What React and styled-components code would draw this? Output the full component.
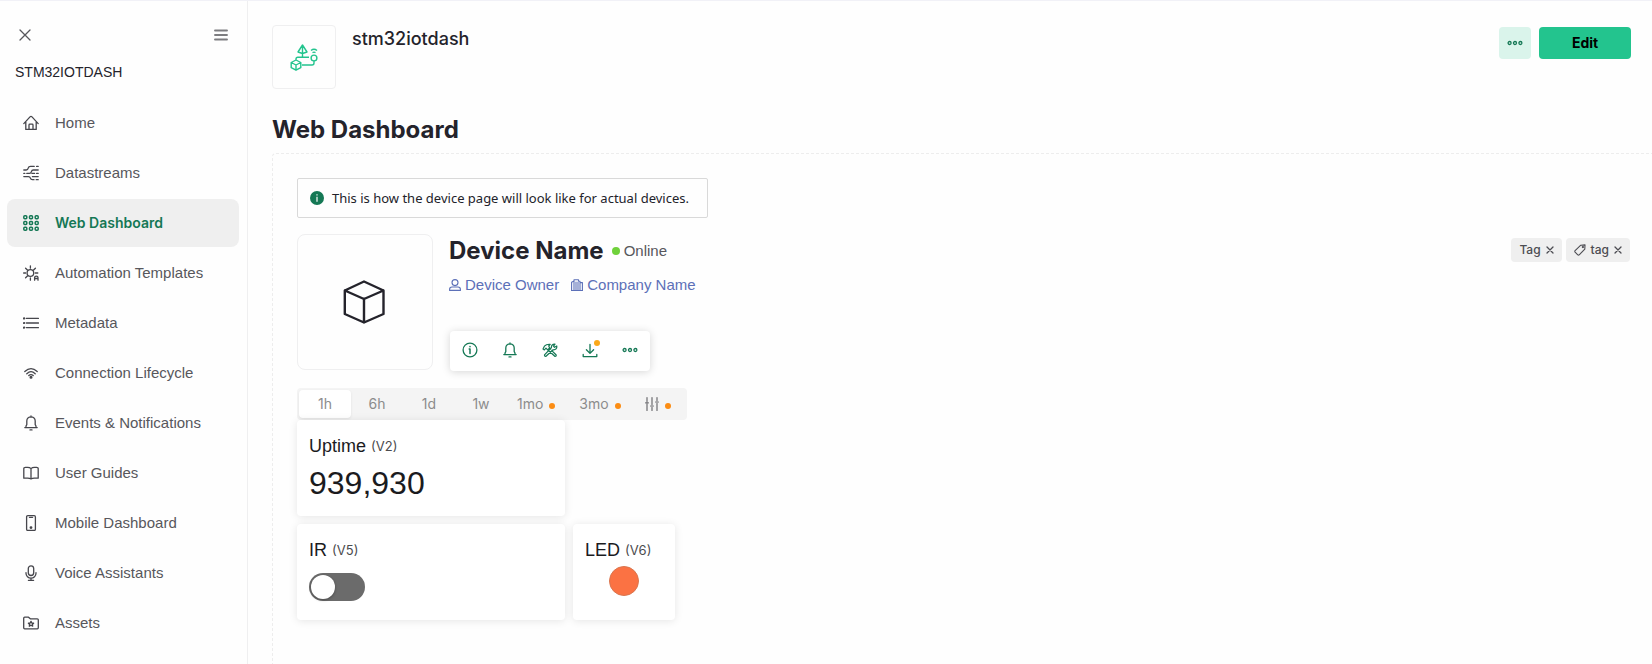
import React, { useState } from "react";
import styled, { createGlobalStyle, css } from "styled-components";

const sans = `"Liberation Sans", Arial, sans-serif`;
const display = `Inter, "Liberation Sans", sans-serif`;

const color = {
  page: "#fefefe",
  ink: "#24232b",
  text: "#57575c",
  muted: "#8c8c8c",
  line: "#efeff0",
  green: "#157855",
  brand: "#23c48e",
  link: "#5c70b8",
  orange: "#fb8c13",
};

const GlobalStyle = createGlobalStyle`
  *, *::before, *::after { box-sizing: border-box; }
  body { margin: 0; background: ${color.page}; color: ${color.ink}; font: 15px/20px ${sans}; overflow: hidden; }
  button { border: 0; padding: 0; background: none; font: inherit; color: inherit; cursor: pointer; }
  h1, h2, h3, p, ul { margin: 0; padding: 0; }
  svg { display: block; flex: none; }
`;

const Page = styled.div`
  display: flex;
  height: 100vh;
  overflow: hidden;
  border-top: 1px solid #f1f1f7;
`;

/* Sidebar */
const Sidebar = styled.aside`
  flex: none;
  width: 248px;
  border-right: 1px solid ${color.line};
  border-top-left-radius: 6px;
`;
const SidebarTop = styled.div`
  display: flex;
  justify-content: space-between;
  padding: 26px 18px 0 17px;
  color: #57575c;
`;
const IconButton = styled.button`
  display: grid;
  place-items: center;
  width: ${(p) => p.$size || 16}px;
  height: ${(p) => p.$size || 16}px;
`;
const MenuButton = styled(IconButton)`
  color: #7d7d80;
`;
const ProductName = styled.p`
  padding: 18px 15px 0;
  font-size: 14px;
  line-height: 22px;
`;
const NavList = styled.ul`
  list-style: none;
  display: flex;
  flex-direction: column;
  gap: 2px;
  padding: 16px 8px 0 7px;
`;
const NavLink = styled.a`
  display: flex;
  align-items: center;
  gap: 16px;
  height: 48px;
  padding: 0 16px;
  border-radius: 8px;
  color: ${color.text};
  text-decoration: none;
  svg { color: #46464c; }
  ${(p) =>
    p.$active &&
    css`
      background: #efefef;
      color: ${color.green};
      font: 600 14px/20px ${display};
      svg { color: ${color.green}; }
    `}
`;

/* Main column */
const Main = styled.main`
  flex: 1;
  min-width: 0;
  display: flex;
  flex-direction: column;
  padding: 24px 0 0 24px;
`;
const Header = styled.header`
  display: flex;
  gap: 16px;
  padding-right: 21px;
`;
const ProductIcon = styled.div`
  display: grid;
  place-items: center;
  width: 64px;
  height: 64px;
  border: 1px solid ${color.line};
  border-radius: 4px;
`;
const Title = styled.h1`
  flex: 1;
  font: 500 18px/28px ${display};
`;
const Actions = styled.div`
  display: flex;
  gap: 8px;
  padding-top: 2px;
`;
const MoreButton = styled.button`
  display: grid;
  place-items: center;
  width: 32px;
  height: 32px;
  border-radius: 4px;
  background: #daf4eb;
  color: ${color.green};
`;
const EditButton = styled.button`
  width: 92px;
  height: 32px;
  border-radius: 4px;
  background: ${color.brand};
  color: #000;
  font: 700 14px/20px ${display};
`;
const Heading = styled.h2`
  font: 700 24px/34px ${display};
`;
const SectionTitle = styled(Heading)`
  padding: 24px 0 6px;
`;
const Canvas = styled.section`
  flex: 1;
  padding: 24px 22px 0 24px;
  border: 1px dashed #ededed;
  border-width: 1px 0 0 1px;
  border-top-left-radius: 4px;
`;
const Notice = styled.div`
  display: inline-flex;
  align-items: center;
  gap: 8px;
  height: 40px;
  padding: 0 18px 0 12px;
  border: 1px solid #d9d9d9;
  border-radius: 2px;
  color: #22222a;
  font: 13px/20px "Noto Sans", "Open Sans", sans-serif;
  vertical-align: top;
`;
const Device = styled.div`
  display: flex;
  gap: 16px;
  padding-top: 16px;
`;
const DeviceImage = styled.div`
  flex: none;
  display: grid;
  place-items: center;
  width: 136px;
  height: 136px;
  border: 1px solid ${color.line};
  border-radius: 8px;
`;
const DeviceInfo = styled.div`
  flex: 1;
`;
const Row = styled.div`
  display: flex;
  align-items: center;
  gap: ${(p) => p.$gap || 8}px;
`;
const Status = styled.span`
  display: flex;
  align-items: center;
  gap: 4px;
  color: ${color.text};
`;
const Dot = styled.span`
  width: ${(p) => p.$size || 6}px;
  height: ${(p) => p.$size || 6}px;
  border-radius: 50%;
  background: ${(p) => p.$color || color.orange};
`;
const Owners = styled(Row)`
  padding-top: 7px;
`;
const OwnerLink = styled.a`
  display: flex;
  align-items: center;
  gap: 4px;
  color: ${color.link};
  text-decoration: none;
`;
const Toolbar = styled.div`
  display: flex;
  width: fit-content;
  margin: 36px 0 0 1px;
  border-radius: 4px;
  background: #fff;
  box-shadow: 0 1px 8px rgba(0, 0, 0, 0.16);
  color: ${color.green};
`;
const ToolButton = styled(IconButton)`
  position: relative;
  padding-bottom: 2px;
`;
const Badge = styled(Dot)`
  position: absolute;
  top: 9px;
  right: 10px;
  background: #fba919;
`;
const Tags = styled.div`
  display: flex;
  align-items: flex-start;
  gap: 4px;
  padding-top: 4px;
`;
const Tag = styled.span`
  display: flex;
  align-items: center;
  gap: 5px;
  height: 24px;
  padding: 0 8px;
  border-radius: 4px;
  background: #efefef;
  color: #4c4c52;
  font: 500 12px/16px ${display};
`;

/* Time range */
const Ranges = styled.div`
  display: inline-flex;
  margin-top: 17px;
  padding: 2px;
  border-radius: 4px;
  background: #f4f4f4;
  color: ${color.muted};
  vertical-align: top;
  svg { color: #6a6a6e; }
`;
const Range = styled.button`
  display: flex;
  align-items: center;
  justify-content: center;
  gap: 6px;
  min-width: ${(p) => (p.$limited ? 0 : 52)}px;
  height: 28px;
  padding: ${(p) => (p.$limited ? "0 14px 0 10px" : "0 12px")};
  border-radius: 4px;
  font: 14px/20px ${display};
  ${(p) =>
    p.$active &&
    css`
      background: #fff;
      box-shadow: 0 1px 3px rgba(0, 0, 0, 0.08);
    `}
  ${Dot} { margin-top: 4px; }
`;

/* Widgets */
const Widgets = styled.div`
  display: grid;
  grid-template-columns: 268px 102px;
  grid-auto-rows: 96px;
  gap: 8px;
`;
const Widget = styled.article`
  grid-column: ${(p) => p.$column || 1};
  padding: 12px;
  border-radius: 4px;
  background: #fff;
  box-shadow: 0 1px 8px rgba(0, 0, 0, 0.1);
`;
const WidgetTitle = styled.h3`
  font: 400 18px/28px ${sans};
  color: #1b1b1e;
  white-space: nowrap;
`;
const Pin = styled.span`
  color: #4b4b4e;
  font: 13px/20px ${display};
  vertical-align: 1px;
`;
const Value = styled.p`
  color: #1b1b1e;
  font: 32px/46px ${sans};
`;
const Switch = styled.input`
  appearance: none;
  display: flex;
  width: 56px;
  height: 28px;
  margin: 9px 0 0;
  padding: 2px;
  border-radius: 14px;
  background: #6b6b6b;
  cursor: pointer;
  &::before {
    content: "";
    width: 24px;
    height: 24px;
    border-radius: 50%;
    background: #fff;
    box-shadow: 0 1px 3px rgba(0, 0, 0, 0.3);
  }
  &:checked { justify-content: flex-end; background: ${color.brand}; }
`;
const Led = styled.div`
  width: 30px;
  height: 30px;
  margin: 2px auto 0;
  border: 1px solid #d9764f;
  border-radius: 50%;
  background: #fb7243;
`;

const Svg = ({ size = 16, box = 16, width = 1.2, children }) => (
  <svg
    width={size}
    height={size}
    viewBox={`0 0 ${box} ${box}`}
    fill="none"
    stroke="currentColor"
    strokeWidth={width}
    strokeLinecap="round"
    strokeLinejoin="round"
    aria-hidden="true"
  >
    {children}
  </svg>
);

const Bell = () => (
  <Svg width={1.3}>
    <path d="M1.8 12.6h12.4M3 12.4V11l.8-1.4V6a4.2 4.2 0 0 1 8.4 0v3.6L13 11v1.4M8 2V.9M7 14.9h2" />
  </Svg>
);
const More = () => (
  <Svg width={1.3}>
    <circle cx="2.6" cy="8" r="1.5" />
    <circle cx="8" cy="8" r="1.5" />
    <circle cx="13.4" cy="8" r="1.5" />
  </Svg>
);
const Cross = ({ size = 8, width = 1.3 }) => (
  <Svg size={size} box={size} width={width}>
    <path d={`M1 1 ${size - 1} ${size - 1}M${size - 1} 1 1 ${size - 1}`} />
  </Svg>
);

const navItems = [
  ["Home", <Svg width={1.3}><path d="M.8 8.6 7 1.9q1-1 2 0l6.2 6.7M2.8 7v7.4h10.4V7M6 14.2V10q0-.8.8-.8h2.4q.8 0 .8.8v4.2" /></Svg>],
  [
    "Datastreams",
    <Svg width={1.3}>
      <path d="M7.6 1.4h3.6M13.6 1.4h1.6M.8 5h2.4q1.6 0 2-1.8T7.6 1.4M.8 8.4h1M3.8 8.4h2.6q1.600 0 2-1.700t2-1.700h4.800M.8 11.600h4.600q1.600 0 2 1.500t2 1.600h1.600M13.200 14.700h2M9 8.400h2.600M13.600 8.400h1.600M9.400 11.600h5.800" />
    </Svg>,
  ],
  [
    "Web Dashboard",
    <Svg width={1.5}>
      {[2.3, 8, 13.7].map((y) => [2.3, 8, 13.7].map((x) => <rect key={`${x}-${y}`} x={x - 1.5} y={y - 1.5} width="3" height="3" rx="1" />))}
    </Svg>,
  ],
  [
    "Automation Templates",
    <Svg width={1.3}>
      <circle cx="7.4" cy="8" r="3.3" />
      <path d="M7.4.8v2.4M.6 8h2M12.2 8h2.6M2.6 3.2 4.4 5M12.4 3.2 10.6 5M2.6 12.8 4.4 11M7.4 13v2.2M11.6 15.2v-2.6q0-1.5 1.7-1.5t1.7 1.5v2.6M11.8 13.5H15" />
    </Svg>,
  ],
  [
    "Metadata",
    <Svg width={1.4}>
      <path d="M3.4 3.4h12M3.4 8h12M3.4 12.6h12" />
      <path d="M1 3.4h.2M1 8h.2M1 12.6h.2" strokeWidth="2.2" />
    </Svg>,
  ],
  [
    "Connection Lifecycle",
    <Svg width={1.3}>
      <path d="M1.8 6.5Q8 .8 14.2 6.5M3.8 8.7Q8 4.6 12.2 8.7M5.8 10.6Q8 8.6 10.2 10.6" />
      <circle cx="8" cy="12.2" r=".9" fill="currentColor" />
    </Svg>,
  ],
  ["Events & Notifications", <Bell />],
  ["User Guides", <Svg width={1.3}><path d="M8 3.6Q6.8 2.4 4.6 2.4H2.4Q.8 2.4.8 3.6v9.6h3.8q2.2 0 3.4.6 1.2-.6 3.4-.6h3.8V3.6q0-1.2-1.6-1.2h-2.2Q9.2 2.4 8 3.6v10" /></Svg>],
  [
    "Mobile Dashboard",
    <Svg width={1.3}>
      <rect x="3.6" y=".7" width="8.8" height="14.8" rx="1.2" />
      <path d="M6.4 2.3h3.2" />
      <circle cx="8" cy="12.6" r=".8" fill="currentColor" />
    </Svg>,
  ],
  ["Voice Assistants", <Svg width={1.3}><rect x="5.3" y=".9" width="5.4" height="9.6" rx="2.7" /><path d="M3 7.6v.6a5 5 0 0 0 10 0v-.6M8 13.2v2M5.4 15.3h5.2" /></Svg>],
  [
    "Assets",
    <Svg width={1.3}>
      <path d="M.7 3.2q0-1 1-1h3.8l1.8 1.6h7q1 0 1 1v8q0 1-1 1H1.7q-1 0-1-1z" />
      <path d="m8 6.4.8 1.6 1.8.2-1.3 1.2.4 1.8L8 10.3l-1.7.9.4-1.8-1.3-1.2L7.2 8z" />
    </Svg>,
  ],
];

const ProductGlyph = () => (
  <svg width="28" height="28" viewBox="0 0 28 28" fill="none" stroke={color.brand} strokeWidth="1.4" strokeLinejoin="round" aria-hidden="true">
    <path d="M12.5 2 8 9l4.5 1.5L17 9zM12.5 2v12M6 17v-1q0-1.8 1.8-1.8H19M12 22h10q2 0 2-2v-2M6 17l4.800 2.500v5.200L6 27.200 1.200 24.700v-5.200zM1.200 19.500 6 22l4.800-2.500M6 22v5" />
    <circle cx="24" cy="15" r="2.9" />
    <path d="M21 7.5q3-2.5 6 0M22.5 9.6q1.5-1 3 0" />
  </svg>
);

const ranges = [
  { label: "1h" },
  { label: "6h" },
  { label: "1d" },
  { label: "1w" },
  { label: "1mo", limited: true },
  { label: "3mo", limited: true },
  {
    label: "Custom range",
    limited: true,
    icon: (
      <Svg size={14} box={14} width={1.2}>
        <path d="M2 .6v4M2 7v6.4M7 .6v7M7 10.4v3M12 .6v3M12 6.4v7M.6 5.8h2.8M5.6 9h2.8M10.6 5h2.8" />
      </Svg>
    ),
  },
];

export default function App() {
  const [range, setRange] = useState("1h");
  const [on, setOn] = useState(false);

  return (
    <Page>
      <GlobalStyle />
      <Sidebar>
        <SidebarTop>
          <IconButton aria-label="Close"><Cross size={12} /></IconButton>
          <MenuButton aria-label="Collapse menu">
            <Svg width={1.9}><path d="M2 3.500h12M2 8h12M2 12.500h12" /></Svg>
          </MenuButton>
        </SidebarTop>
        <ProductName>STM32IOTDASH</ProductName>
        <nav>
          <NavList>
            {navItems.map(([label, icon]) => (
              <li key={label}>
                <NavLink href="#" $active={label === "Web Dashboard"}>
                  {icon}
                  {label}
                </NavLink>
              </li>
            ))}
          </NavList>
        </nav>
      </Sidebar>

      <Main>
        <Header>
          <ProductIcon><ProductGlyph /></ProductIcon>
          <Title>stm32iotdash</Title>
          <Actions>
            <MoreButton aria-label="More actions"><More /></MoreButton>
            <EditButton>Edit</EditButton>
          </Actions>
        </Header>
        <SectionTitle>Web Dashboard</SectionTitle>

        <Canvas>
          <Notice>
            <svg width="14" height="14" viewBox="0 0 14 14" aria-hidden="true">
              <circle cx="7" cy="7" r="7" fill={color.green} />
              <path d="M6.4 3.2h1.200v1.300H6.400zM6.400 5.700h1.200v5H6.400z" fill="#fff" />
            </svg>
            This is how the device page will look like for actual devices.
          </Notice>

          <Device>
            <DeviceImage>
              <Svg size={44} box={44} width={2.4}>
                <path d="M21 1.5 40.5 10.5V34L21 42.5 1.8 34V10.500zM1.800 10.500 21 19l19.500-8.500M21 19v23.500" />
              </Svg>
            </DeviceImage>
            <DeviceInfo>
              <Row>
                <Heading>Device Name</Heading>
                <Status><Dot $size={8} $color="#6fd13b" />Online</Status>
              </Row>
              <Owners $gap={12}>
                <OwnerLink href="#">
                  <Svg size={12} box={12} width={1.1}>
                    <circle cx="6" cy="3.6" r="3" />
                    <path d="M.6 11.4v-1.2Q.6 8 3 8h6q2.4 0 2.4 2.2v1.2z" />
                  </Svg>
                  Device Owner
                </OwnerLink>
                <OwnerLink href="#">
                  <Svg size={12} box={12} width={1.1}>
                    <path d="M.6 11.4V3.2L3 2V.8h4.5V2l1.5.4v9M3 2v9.400M5 3v8.400M7 3v8.400M9 3.600h2.400v7.800M.4 11.500h11.200" />
                  </Svg>
                  Company Name
                </OwnerLink>
              </Owners>
              <Toolbar>
                <ToolButton $size={40} aria-label="Information">
                  <Svg width={1.3}>
                    <circle cx="8" cy="8" r="6.9" />
                    <path d="M8 4.4v.4M7.2 7H8v4.4" strokeWidth="1.5" />
                  </Svg>
                </ToolButton>
                <ToolButton $size={40} aria-label="Notifications"><Bell /></ToolButton>
                <ToolButton $size={40} aria-label="Tools">
                  <Svg width={1.2}>
                    <path d="M1 7 2.400 4.200Q4.400 2 8.200 2.300L6.700 4l.9 1.800-2 2L4 6.200 2.400 7.900zM7.600 5.800l1.200 1.200M9.800 8.600l4.400 4.400q.2 1.500-1.400 1.300L7.300 9.200M9.400 5.600Q9.200 2 13 2.200l-1.500 1.900 1 1.200L14.800 4q.4 4-3.700 3.800L4 14.300q-1.700.2-1.500-1.400z" />
                  </Svg>
                </ToolButton>
                <ToolButton $size={40} aria-label="Download">
                  <Svg width={1.3}><path d="M8 2.5v8.6M4.4 7.8 8 11.400l3.600-3.600M1.200 12.500v2.100h13.600v-2.100" /></Svg>
                  <Badge />
                </ToolButton>
                <ToolButton $size={40} aria-label="More"><More /></ToolButton>
              </Toolbar>
            </DeviceInfo>
            <Tags>
              <Tag>
                Tag
                <IconButton $size={8} aria-label="Remove Tag"><Cross /></IconButton>
              </Tag>
              <Tag>
                <Svg size={12} box={12} width={1.1}>
                  <path d="M6.8 1.2 11 .9l-.2 4.200-5.600 5.700q-.7.600-1.400 0L1.100 8.100q-.6-.7 0-1.400z" />
                  <circle cx="8.9" cy="3.1" r=".6" />
                </Svg>
                tag
                <IconButton $size={8} aria-label="Remove tag"><Cross /></IconButton>
              </Tag>
            </Tags>
          </Device>

          <Ranges>
            {ranges.map(({ label, limited, icon }) => (
              <Range key={label} aria-label={label} aria-pressed={range === label} $active={range === label} $limited={limited} onClick={() => setRange(label)}>
                {icon || label}
                {limited && <Dot />}
              </Range>
            ))}
          </Ranges>

          <Widgets>
            <Widget>
              <WidgetTitle>Uptime <Pin>(V2)</Pin></WidgetTitle>
              <Value>939,930</Value>
            </Widget>
            <Widget>
              <WidgetTitle as="label" htmlFor="ir">IR <Pin>(V5)</Pin></WidgetTitle>
              <Switch id="ir" type="checkbox" role="switch" checked={on} onChange={(e) => setOn(e.target.checked)} />
            </Widget>
            <Widget $column={2}>
              <WidgetTitle>LED <Pin>(V6)</Pin></WidgetTitle>
              <Led />
            </Widget>
          </Widgets>
        </Canvas>
      </Main>
    </Page>
  );
}
